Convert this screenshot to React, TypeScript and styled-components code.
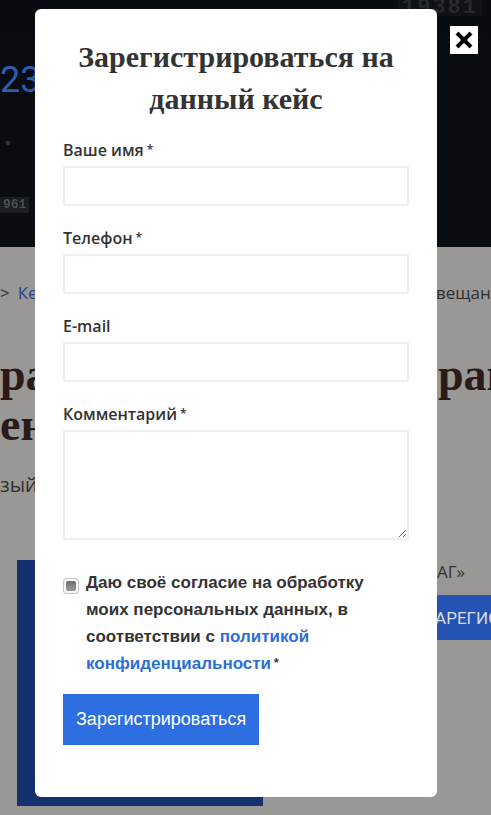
import {FC} from 'react'
import styled, {createGlobalStyle} from 'styled-components'

const GlobalStyle = createGlobalStyle`
  html, body {
    margin: 0;
    padding: 0;
  }

  body {
    background: #9a9896;
    font-family: "Open Sans", "Liberation Sans", sans-serif;
    overflow: hidden;
  }
`

const Page = styled.div`
  width: 491px;
  height: 815px;
  overflow: hidden;
  background: #9a9896;
`

const Hero = styled.header`
  height: 247px;
  display: flex;
  flex-direction: column;
  background:
    radial-gradient(circle at 8px 143px, #2a2f35 0 2px, transparent 3px),
    radial-gradient(circle at 470px 260px, #1c2126 0 1px, transparent 2px),
    linear-gradient(180deg, #080b0f 0%, #0a0e12 100%);
`

const HeroCode = styled.span`
  align-self: flex-end;
  margin-right: 9px;
  padding: 0 4px;
  font: 700 22px/16px "Liberation Mono", monospace;
  letter-spacing: 2px;
  color: #262a2f;
  background: #101316;
  filter: blur(0.7px);
`

const HeroNumber = styled.span`
  margin-top: 44px;
  font: 400 36px/40px Roboto, sans-serif;
  color: #2d5cb0;
`

const HeroBadge = styled.span`
  align-self: flex-start;
  margin-top: 97px;
  padding: 0 3px;
  font: 600 13px/16px "Liberation Mono", monospace;
  color: #4a5057;
  background: #1a1e22;
  filter: blur(0.4px);
`

const Content = styled.section`
  padding-top: 34px;
  display: flex;
  flex-direction: column;
`

const Crumbs = styled.div`
  display: flex;
  justify-content: space-between;
  white-space: nowrap;
  font-size: 17px;
  line-height: 24px;
  color: #2f2f2f;
`

const CrumbLink = styled.span`
  color: #27458f;
  margin-left: 8px;
`

const CrumbTail = styled.span`
  margin-right: -20px;
`

const Heading = styled.h2`
  margin: 45px 0 0;
  font-weight: 700;
`

const HeadLine = styled.div`
  display: flex;
  justify-content: space-between;
  white-space: nowrap;
  font: 700 46px/50px "Liberation Serif", serif;
  color: #2a1b19;
`

const HeadTail = styled.span`
  margin-right: -22px;
`

const Subtitle = styled.p`
  margin: 21px 0 0;
  font-size: 20px;
  line-height: 28px;
  color: #323232;
  white-space: nowrap;
`

const Promo = styled.div`
  margin-top: 61px;
  display: flex;
`

const PromoBlock = styled.div`
  flex: 0 0 246px;
  margin-left: 17px;
  height: 246px;
  background: #15306e;
`

const PromoSide = styled.div`
  margin-left: 140px;
  flex: 1;
  min-width: 0;
  display: flex;
  flex-direction: column;
  white-space: nowrap;
  overflow: hidden;
`

const PromoText = styled.span`
  padding-left: 34px;
  font-size: 17px;
  line-height: 24px;
  color: #333;
`

const PromoBar = styled.div`
  margin-top: 11px;
  height: 45px;
  padding-left: 22px;
  display: flex;
  align-items: center;
  background: #2453b4;
  color: #d7dce8;
  font: 400 17px Roboto, sans-serif;
`

const Modal = styled.div`
  position: fixed;
  top: 9px;
  left: 35px;
  width: 402px;
  box-sizing: border-box;
  padding: 27px 28px 52px;
  background: #fff;
  border-radius: 6px;
`

const Close = styled.button`
  position: fixed;
  top: 26px;
  left: 450px;
  width: 28px;
  height: 28px;
  padding: 0;
  border: none;
  background: #fff;
  display: flex;
  align-items: center;
  justify-content: center;
`

const Title = styled.h3`
  margin: 0 0 18px;
  text-align: center;
  font: 700 30px/42px "Liberation Serif", serif;
  color: #333;
`

const Field = styled.label`
  display: flex;
  flex-direction: column;
  margin-bottom: 20px;
`

const LabelText = styled.span`
  font-weight: 600;
  font-size: 16px;
  line-height: 24px;
  color: #333;
  margin-bottom: 4px;
`

const Req = styled.span`
  font-size: 12px;
  margin-left: 3px;
  vertical-align: 2px;
`

const Input = styled.input`
  height: 40px;
  box-sizing: border-box;
  border: 2px solid #efefef;
  border-radius: 0;
  outline: none;
`

const TextArea = styled.textarea`
  height: 110px;
  box-sizing: border-box;
  border: 2px solid #efefef;
  border-radius: 0;
  outline: none;
  resize: vertical;
`

const Consent = styled.div`
  margin-top: 29px;
  display: flex;
  gap: 7px;
`

const Check = styled.span`
  flex: 0 0 auto;
  width: 16px;
  height: 16px;
  margin-top: 9px;
  box-sizing: border-box;
  border: 1px solid #c4c4c4;
  border-radius: 3px;
  background: #f7f7f7;
  display: flex;
  align-items: center;
  justify-content: center;

  &::after {
    content: '';
    width: 10px;
    height: 10px;
    border-radius: 2px;
    background: linear-gradient(180deg, #6f6f6f 0%, #9a9a9a 100%);
  }
`

const ConsentText = styled.p`
  margin: 0;
  padding-right: 12px;
  font: 700 17px/27px "Liberation Sans", Arial, sans-serif;
  color: #333;
`

const PolicyLink = styled.a`
  color: #2c6ed8;
  text-decoration: none;
`

const Submit = styled.button`
  margin-top: 17px;
  height: 51px;
  padding: 0 13px;
  border: none;
  background: #2d6fe3;
  color: #fff;
  font: 400 18px "Liberation Sans", Arial, sans-serif;
`

const FormField: FC<{label: string; required?: boolean; multiline?: boolean; type?: string}> = ({
  label,
  required,
  multiline,
  type = 'text',
}) => (
  <Field>
    <LabelText>
      {label}
      {required && <Req>*</Req>}
    </LabelText>
    {multiline ? <TextArea /> : <Input type={type} />}
  </Field>
)

const App: FC = () => {
  return (
    <Page>
      <GlobalStyle />

      <Hero>
        <HeroCode>19381</HeroCode>
        <HeroNumber>23</HeroNumber>
        <HeroBadge>961</HeroBadge>
      </Hero>

      <Content>
        <Crumbs>
          <span>
            &gt;<CrumbLink>Кейсы</CrumbLink>
          </span>
          <CrumbTail>Оповещания</CrumbTail>
        </Crumbs>

        <Heading>
          <HeadLine>
            <span>ра</span>
            <HeadTail>ран</HeadTail>
          </HeadLine>
          <HeadLine>
            <span>ен</span>
          </HeadLine>
        </Heading>

        <Subtitle>зый</Subtitle>

        <Promo>
          <PromoBlock />
          <PromoSide>
            <PromoText>АГ»</PromoText>
            <PromoBar>ЗАРЕГИСТРИРОВАТЬСЯ</PromoBar>
          </PromoSide>
        </Promo>
      </Content>

      <Modal>
        <Title>
          Зарегистрироваться на
          <br />
          данный кейс
        </Title>

        <FormField label="Ваше имя" required />
        <FormField label="Телефон" required type="tel" />
        <FormField label="E-mail" type="email" />
        <FormField label="Комментарий" required multiline />

        <Consent>
          <Check />
          <ConsentText>
            Даю своё согласие на обработку моих персональных данных, в соответствии с{' '}
            <PolicyLink href="#">политикой конфиденциальности</PolicyLink>
            <Req>*</Req>
          </ConsentText>
        </Consent>

        <Submit>Зарегистрироваться</Submit>
      </Modal>

      <Close aria-label="Закрыть">
        <svg width="20" height="20" viewBox="0 0 20 20">
          <path d="M3 3L17 17M17 3L3 17" stroke="#000" strokeWidth="4" />
        </svg>
      </Close>
    </Page>
  )
}

export default App
